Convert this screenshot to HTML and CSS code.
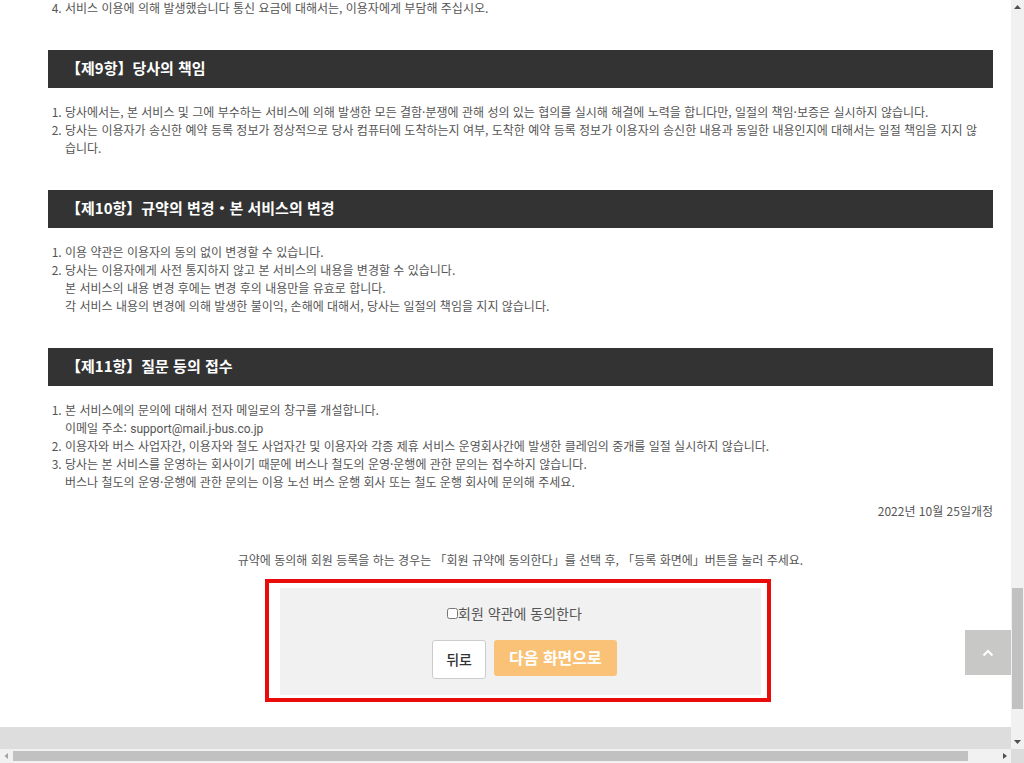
FILE: index.html
```
<!DOCTYPE html>
<html lang="ko">
<head>
  <meta charset="UTF-8" />
  <meta name="viewport" content="width=device-width, initial-scale=1.0"/>
  <title>회원 약관</title>
  <link rel="stylesheet" href="styles.css">
</head>
<body>

  <div class="window">
    <div class="page">
      <main class="terms">
        <ol start="4">
          <li>서비스 이용에 의해 발생했습니다 통신 요금에 대해서는, 이용자에게 부담해 주십시오.</li>
        </ol>

        <h2>【제9항】당사의 책임</h2>
        <ol>
          <li>당사에서는, 본 서비스 및 그에 부수하는 서비스에 의해 발생한 모든 결함·분쟁에 관해 성의 있는 협의를 실시해 해결에 노력을 합니다만, 일절의 책임·보증은 실시하지 않습니다.</li>
          <li>당사는 이용자가 송신한 예약 등록 정보가 정상적으로 당사 컴퓨터에 도착하는지 여부, 도착한 예약 등록 정보가 이용자의 송신한 내용과 동일한 내용인지에 대해서는 일절 책임을 지지 않습니다.</li>
        </ol>

        <h2>【제10항】규약의 변경・본 서비스의 변경</h2>
        <ol>
          <li>이용 약관은 이용자의 동의 없이 변경할 수 있습니다.</li>
          <li>당사는 이용자에게 사전 통지하지 않고 본 서비스의 내용을 변경할 수 있습니다.<br>본 서비스의 내용 변경 후에는 변경 후의 내용만을 유효로 합니다.<br>각 서비스 내용의 변경에 의해 발생한 불이익, 손해에 대해서, 당사는 일절의 책임을 지지 않습니다.</li>
        </ol>

        <h2>【제11항】질문 등의 접수</h2>
        <ol>
          <li>본 서비스에의 문의에 대해서 전자 메일로의 창구를 개설합니다.<br>이메일 주소: <span class="mail">support@mail.j-bus.co.jp</span></li>
          <li>이용자와 버스 사업자간, 이용자와 철도 사업자간 및 이용자와 각종 제휴 서비스 운영회사간에 발생한 클레임의 중개를 일절 실시하지 않습니다.</li>
          <li>당사는 본 서비스를 운영하는 회사이기 때문에 버스나 철도의 운영·운행에 관한 문의는 접수하지 않습니다.<br>버스나 철도의 운영·운행에 관한 문의는 이용 노선 버스 운행 회사 또는 철도 운행 회사에 문의해 주세요.</li>
        </ol>

        <p class="revised">2022년 10월 25일개정</p>
        <p class="note">규약에 동의해 회원 등록을 하는 경우는 「회원 규약에 동의한다」를 선택 후, 「등록 화면에」버튼을 눌러 주세요.</p>

        <form class="agree-box">
          <label class="agree" for="agree"><input type="checkbox" id="agree" />회원 약관에 동의한다</label>
          <div class="buttons">
            <button type="button" class="back">뒤로</button>
            <button type="submit" class="next">다음 화면으로</button>
          </div>
        </form>
      </main>

      <footer class="footer"></footer>

      <a href="#" class="page-top" aria-label="맨 위로">
        <svg width="12" height="8" viewBox="0 0 12 8"><path d="M1.500 6.500 6 2l4.500 4.500" fill="none" stroke="#fff" stroke-width="2"/></svg>
      </a>
    </div>

    <!-- Scrollbars -->
    <div class="bar-v">
      <svg width="13" height="14" viewBox="0 0 13 14"><path d="M3 9h7L6.500 5z" fill="#505050"/></svg>
      <div class="track-v"><div class="thumb-v"></div></div>
      <svg width="13" height="14" viewBox="0 0 13 14"><path d="M3 5h7L6.500 9z" fill="#505050"/></svg>
    </div>
    <div class="bar-h">
      <svg width="13" height="14" viewBox="0 0 13 14"><path d="M8 4v6L4.500 7z" fill="#a3a3a3"/></svg>
      <div class="track-h"><div class="thumb-h"></div></div>
      <svg width="13" height="14" viewBox="0 0 13 14"><path d="M5 4v6l4-3z" fill="#505050"/></svg>
    </div>
    <div class="corner"></div>
  </div>

</body>
</html>
```
FILE: styles.css
```
* {
  box-sizing: border-box;
}

body {
  margin: 0;
  background: #fff;
  color: #555;
  font-family: "Noto Sans CJK JP", "Noto Sans CJK KR", sans-serif;
  font-size: 12px;
  line-height: 18px;
}

.window {
  display: grid;
  grid-template-columns: 1fr 13px;
  grid-template-rows: 1fr 14px;
  height: 100vh;
}

.page {
  position: relative;
  display: flex;
  flex-direction: column;
  overflow: hidden;
}

.terms {
  flex: 1;
  margin-top: -1px;
  padding: 0 18px 0 48px;
}

h2 {
  margin: 33px 0 15px;
  padding: 6px 18px 8px;
  background: #333;
  color: #fff;
  font-size: 15px;
  line-height: 24px;
}

ol {
  margin: 0;
  padding: 0 8px 0 17px;
}

li {
  word-break: break-all;
}

.mail {
  font-family: Roboto, sans-serif;
  line-height: 1;
}

.revised {
  margin: 11px 0 0;
  text-align: right;
}

.note {
  margin: 31px 0 19px;
  text-align: center;
}

.agree-box {
  position: relative;
  max-width: 481px;
  margin: 0 auto;
  padding: 16px;
  background: #f1f1f1;
  text-align: center;
}

/* red frame around the form */
.agree-box::after {
  content: "";
  position: absolute;
  inset: -9px -10px -7px -15px;
  border: 4px solid #ea0b0b;
  pointer-events: none;
}

.agree {
  display: flex;
  justify-content: center;
  align-items: center;
  padding-right: 12px;
  font-size: 14px;
  line-height: 18px;
}

.agree input {
  width: 11px;
  height: 11px;
  margin: 0;
}

.buttons {
  display: flex;
  justify-content: center;
  align-items: flex-start;
  gap: 8px;
  margin-top: 18px;
  margin-right: -8px;
}

button {
  border: 0;
  border-radius: 3px;
  font-family: inherit;
  cursor: pointer;
}

.back {
  padding: 8px 13px 9px;
  border: 1px solid #ccc;
  background: #fff;
  color: #333;
  font-size: 14px;
  font-weight: 500;
  line-height: 20px;
}

.next {
  padding: 7px 15px 9px;
  background: #f9c277;
  color: #fff;
  font-size: 16px;
  font-weight: bold;
  line-height: 20px;
}

.footer {
  height: 22px;
  background: #ddd;
}

.page-top {
  position: absolute;
  right: 0;
  bottom: 74px;
  display: flex;
  justify-content: center;
  align-items: center;
  width: 46px;
  height: 45px;
  background: #c8c8c7;
}

.bar-v {
  display: flex;
  flex-direction: column;
  background: #f1f1f1;
}

.track-v {
  display: flex;
  flex: 1;
  flex-direction: column;
  justify-content: flex-end;
  padding: 0 1px 26px;
}

.thumb-v {
  height: 121px;
  background: #c1c1c1;
}

.bar-h {
  display: flex;
  background: #f1f1f1;
}

.track-h {
  flex: 1;
  padding: 2px 0;
}

.thumb-h {
  width: 97%;
  height: 10px;
  background: #c1c1c1;
}

.corner {
  background: #dcdcdc;
}
```
